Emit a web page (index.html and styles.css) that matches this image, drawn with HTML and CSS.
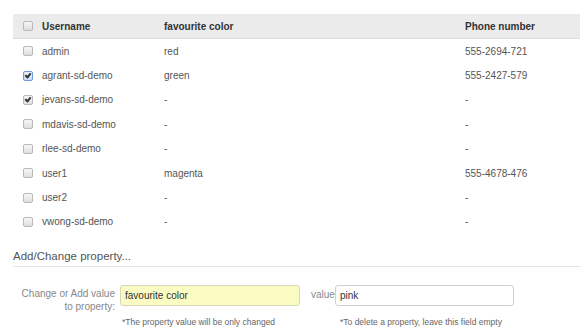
FILE: index.html
```html
<!DOCTYPE html>
<html lang="en">
<head>
  <meta charset="UTF-8" />
  <title>User properties</title>
  <link rel="stylesheet" href="styles.css">
</head>
<body>
  <div class="page">
    <table class="users">
      <colgroup>
        <col class="c-check">
        <col class="c-user">
        <col class="c-prop">
        <col class="c-phone">
      </colgroup>
      <thead>
        <tr>
          <th><span class="box"></span></th>
          <th>Username</th>
          <th>favourite color</th>
          <th>Phone number</th>
        </tr>
      </thead>
      <tbody>
        <tr><td><span class="box"></span></td><td>admin</td><td>red</td><td>555-2694-721</td></tr>
        <tr><td><span class="box checked focus"></span></td><td>agrant-sd-demo</td><td>green</td><td>555-2427-579</td></tr>
        <tr><td><span class="box checked"></span></td><td>jevans-sd-demo</td><td>-</td><td>-</td></tr>
        <tr><td><span class="box"></span></td><td>mdavis-sd-demo</td><td>-</td><td>-</td></tr>
        <tr><td><span class="box"></span></td><td>rlee-sd-demo</td><td>-</td><td>-</td></tr>
        <tr><td><span class="box"></span></td><td>user1</td><td>magenta</td><td>555-4678-476</td></tr>
        <tr><td><span class="box"></span></td><td>user2</td><td>-</td><td>-</td></tr>
        <tr><td><span class="box"></span></td><td>vwong-sd-demo</td><td>-</td><td>-</td></tr>
      </tbody>
    </table>

    <h2 class="section">Add/Change property...</h2>

    <div class="form">
      <label class="lbl" for="prop">Change or Add value<br>to property:</label>
      <input class="field prop" id="prop" type="text" value="favourite color">
      <label class="lbl-value" for="val">value</label>
      <input class="field" id="val" type="text" value="pink">
      <span></span>
      <p class="note">*The property value will be only changed</p>
      <span></span>
      <p class="note note-right">*To delete a property, leave this field empty</p>
    </div>
  </div>
</body>
</html>
```

FILE: styles.css
```css
body {
  margin: 0;
  font-family: "Liberation Sans", Arial, sans-serif;
  color: #555;
  background: #fff;
}

.page {
  padding: 14px 0 0 13px;
}

.users {
  width: 567px;
  border-collapse: collapse;
  table-layout: fixed;
  font-size: 10px;
}

.c-check { width: 29px; }
.c-user { width: 122px; }
.c-prop { width: 301px; }

.users th {
  height: 24px;
  background: #ebebeb;
  border-bottom: 1px solid #dcdcdc;
  text-align: left;
  font-weight: bold;
  color: #333;
  padding: 0;
}

.users td {
  height: 24.4px;
  padding: 0;
  color: #555;
}

.users th:first-child,
.users td:first-child {
  padding-left: 10px;
}

.box {
  display: block;
  width: 8px;
  height: 8px;
  border: 1px solid #b9b9b9;
  border-radius: 2px;
  background: linear-gradient(#f7f7f7, #dedede);
  position: relative;
}

.box.checked::after {
  content: "";
  position: absolute;
  left: 2px;
  top: 0;
  width: 2px;
  height: 4px;
  border: solid #333;
  border-width: 0 2px 2px 0;
  transform: rotate(40deg);
}

.box.focus {
  border-color: #6d9be0;
  background: linear-gradient(#e9f1fc, #c9daf3);
}

.section {
  margin: 15px 0 0;
  padding-bottom: 3px;
  font-size: 11.5px;
  line-height: 14px;
  font-weight: normal;
  color: #555;
  border-bottom: 1px solid #e4e4e4;
}

.form {
  display: grid;
  grid-template-columns: 107px 180px 35px 179px;
  margin-top: 18px;
  font-size: 10px;
}

.lbl {
  padding: 2px 5px 0 0;
  text-align: right;
  line-height: 13px;
  color: #888;
}

.field {
  box-sizing: border-box;
  height: 21px;
  margin: 0;
  padding: 0 4px;
  border: 1px solid #d0d0d0;
  border-radius: 3px;
  font-family: "Liberation Sans", Arial, sans-serif;
  font-size: 10px;
  color: #333;
  background: #fff;
}

.field.prop {
  background: #fbfcc4;
  border-color: #d6d6b8;
}

.lbl-value {
  padding-left: 11px;
  line-height: 20px;
  color: #888;
}

.note {
  margin: 4px 0 0;
  padding-left: 2px;
  font-size: 8.5px;
  line-height: 11px;
  color: #666;
  white-space: nowrap;
}

.note-right {
  padding-left: 5px;
}
```
